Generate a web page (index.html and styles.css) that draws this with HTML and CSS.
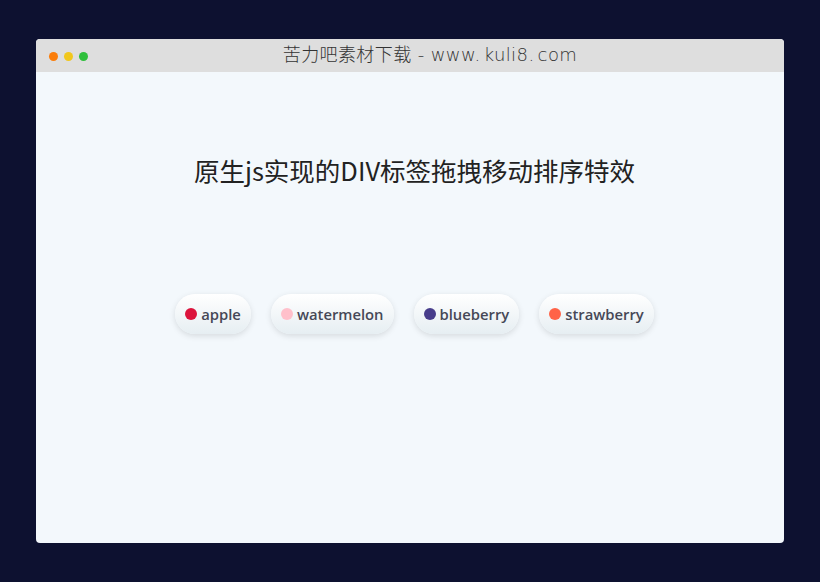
FILE: index.html
```html
<!DOCTYPE html>
<html lang="zh-CN">
<head>
    <meta charset="UTF-8">
    <meta name="viewport" content="width=device-width, initial-scale=1.0">
    <link rel="stylesheet" href="styles.css">
    <title>原生js实现的DIV标签拖拽移动排序特效</title>
</head>
<body>

<div class="window">
    <div class="titlebar">
        <div class="dots">
            <span class="dot orange"></span>
            <span class="dot yellow"></span>
            <span class="dot green"></span>
        </div>
        <div class="site-title">苦力吧素材下载 - <span class="url">www. kuli8. com</span></div>
    </div>

    <div class="content">
        <h1>原生js实现的DIV标签拖拽移动排序特效</h1>

        <ul class="list" id="list">
            <li class="item" draggable="true"><span class="mark" style="background: #dc143c"></span>apple</li>
            <li class="item" draggable="true"><span class="mark" style="background: #ffc0cb"></span>watermelon</li>
            <li class="item" draggable="true"><span class="mark" style="background: #483d8b"></span>blueberry</li>
            <li class="item" draggable="true"><span class="mark" style="background: #ff6347"></span>strawberry</li>
        </ul>
    </div>
</div>

<script>
    const list = document.getElementById('list');
    let dragging = null;

    list.addEventListener('dragstart', (e) => {
        dragging = e.target;
    });

    list.addEventListener('dragover', (e) => {
        e.preventDefault();
        const target = e.target.closest('.item');
        if (!target || target === dragging) return;
        const items = [...list.children];
        if (items.indexOf(dragging) < items.indexOf(target)) {
            target.after(dragging);
        } else {
            target.before(dragging);
        }
    });

    list.addEventListener('dragend', () => {
        dragging = null;
    });
</script>
</body>
</html>
```

FILE: styles.css
```css
body {
    margin: 0;
    padding: 39px 36px;
    background: #0d1130;
}

.window {
    height: 504px;
    background: #f3f8fc;
    border-radius: 4px;
    overflow: hidden;
    display: flex;
    flex-direction: column;
}

.titlebar {
    height: 33px;
    background: #dedede;
    display: flex;
    align-items: center;
    position: relative;
}

.dots {
    display: flex;
    gap: 6px;
    padding-left: 13px;
    padding-top: 2px;
}

.dot {
    width: 9px;
    height: 9px;
    border-radius: 50%;
}

.orange {
    background: #fb7d0a;
}

.yellow {
    background: #f1c71d;
}

.green {
    background: #2fbf3c;
}

.site-title {
    position: absolute;
    left: 40px;
    right: 0;
    top: 3px;
    text-align: center;
    font-family: "DejaVu Sans", "Noto Sans CJK SC", sans-serif;
    font-weight: 200;
    font-size: 18px;
    line-height: 26px;
    color: #333;
    letter-spacing: 0.4px;
}

.url {
    word-spacing: -3px;
}

.content {
    flex: 1;
    display: flex;
    flex-direction: column;
    align-items: center;
    padding-left: 9px;
}

h1 {
    margin: 81px 0 0;
    font-family: "Noto Sans CJK SC", sans-serif;
    font-weight: 400;
    font-size: 25.5px;
    line-height: 34px;
    color: #222;
}

.list {
    list-style: none;
    margin: 107px 0 0;
    padding: 0;
    display: flex;
    gap: 20px;
}

.item {
    height: 40px;
    padding: 0 10px;
    border-radius: 20px;
    display: flex;
    align-items: center;
    gap: 4px;
    background: linear-gradient(to bottom, #ffffff, #e6eef2);
    box-shadow: 0 2px 6px rgba(0, 0, 0, 0.12);
    font-family: "Open Sans", sans-serif;
    font-weight: 600;
    font-size: 14.8px;
    color: #464856;
    cursor: move;
}

.mark {
    width: 12px;
    height: 12px;
    border-radius: 50%;
}
```
